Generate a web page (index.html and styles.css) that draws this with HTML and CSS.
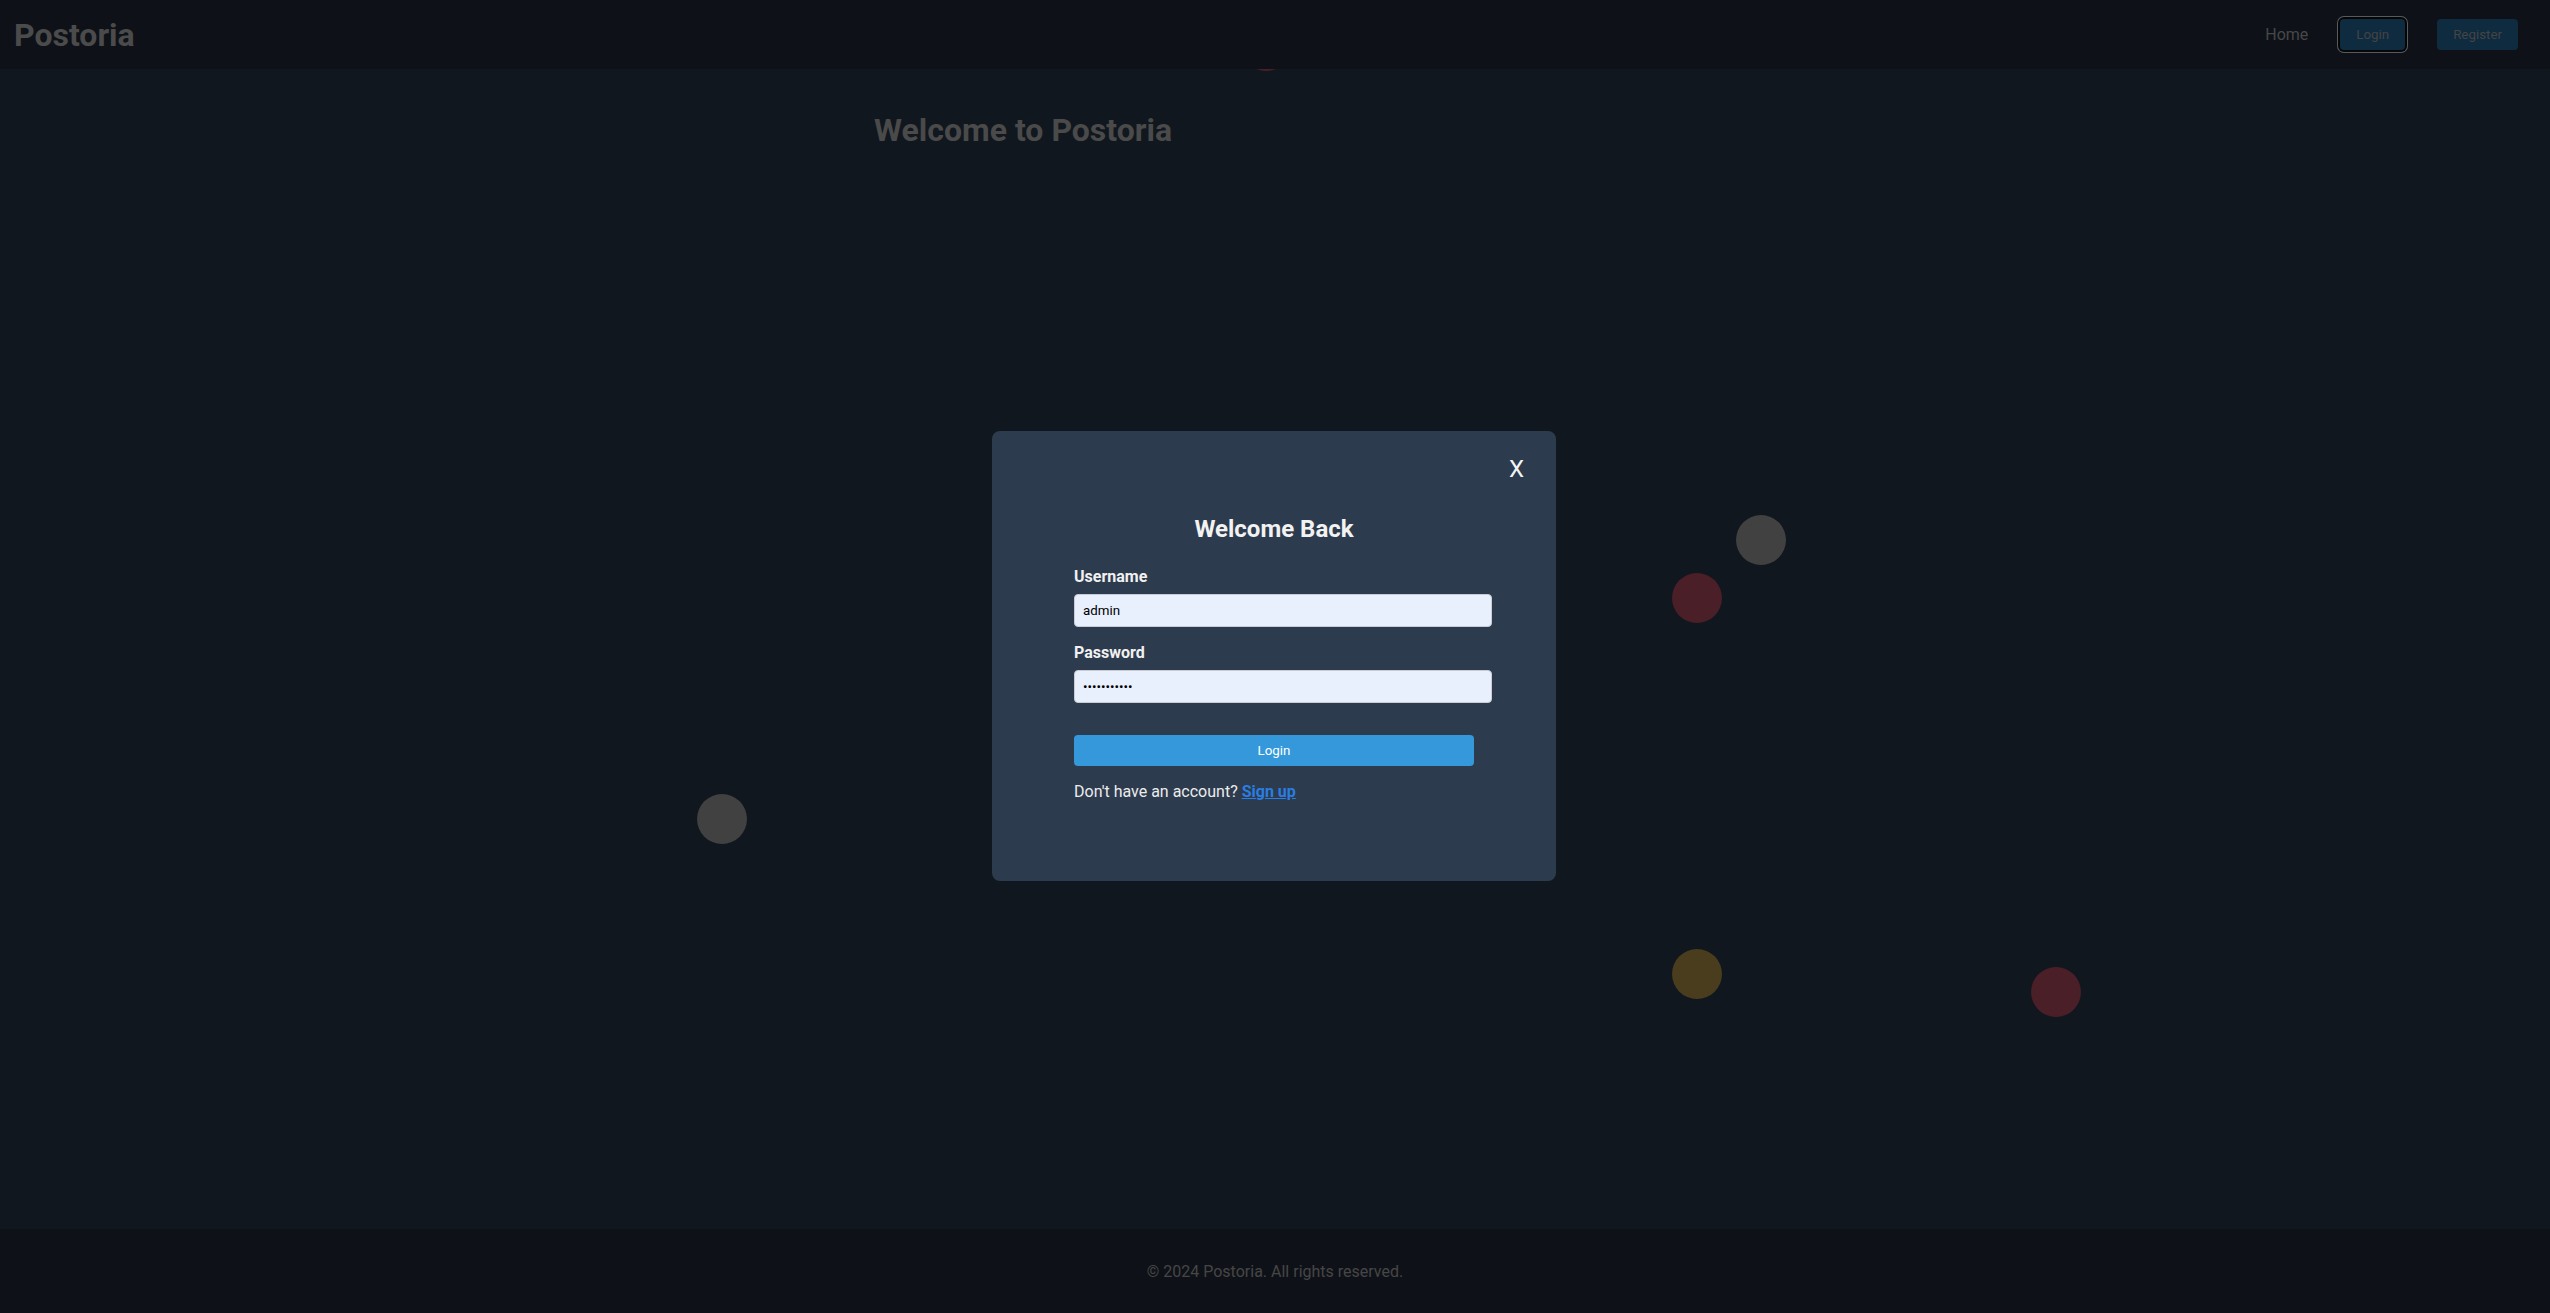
FILE: index.html
```html
<!DOCTYPE html>
<html lang="en">
<head>
<meta charset="utf-8">
<title>Postoria</title>
<link rel="stylesheet" href="styles.css">
</head>
<body>
  <div class="bubbles">
    <span class="bubble red" style="left:1241px;top:21px"></span>
    <span class="bubble gray" style="left:1736px;top:515px"></span>
    <span class="bubble red" style="left:1672px;top:573px"></span>
    <span class="bubble gray" style="left:697px;top:794px"></span>
    <span class="bubble yellow" style="left:1672px;top:949px"></span>
    <span class="bubble red" style="left:2031px;top:967px"></span>
  </div>

  <header class="site-header">
    <div class="logo">Postoria</div>
    <nav class="nav">
      <a class="nav-link" href="#">Home</a>
      <button class="nav-btn focused">Login</button>
      <button class="nav-btn">Register</button>
    </nav>
  </header>

  <main class="main">
    <div class="container">
      <h1 class="page-title">Welcome to Postoria</h1>
    </div>
  </main>

  <footer class="site-footer">© 2024 Postoria. All rights reserved.</footer>

  <div class="overlay">
    <div class="modal">
      <div class="modal-top">
        <button class="close-btn">X</button>
      </div>
      <h2 class="modal-title">Welcome Back</h2>
      <form class="login-form">
        <div class="form-group">
          <label class="form-label">Username</label>
          <input class="form-input" type="text" value="admin">
        </div>
        <div class="form-group">
          <label class="form-label">Password</label>
          <input class="form-input" type="password" value="admin123456">
        </div>
        <button class="submit-btn" type="button">Login</button>
        <p class="signup-text">Don't have an account? <a class="signup-link" href="#">Sign up</a></p>
      </form>
    </div>
  </div>
</body>
</html>
```
FILE: styles.css
```css
* { box-sizing: border-box; }

html, body { height: 100%; }

body {
  margin: 0;
  font-family: Roboto, "Liberation Sans", sans-serif;
  background: #11171e;
  display: flex;
  flex-direction: column;
  min-height: 100vh;
  position: relative;
  overflow: hidden;
}

.bubbles {
  position: absolute;
  inset: 0;
  z-index: 1;
  pointer-events: none;
}

.bubble {
  position: absolute;
  width: 50px;
  height: 50px;
  border-radius: 50%;
}
.bubble.red { background: #4a1f27; }
.bubble.gray { background: #414141; }
.bubble.yellow { background: #4a3d1e; }

.site-header {
  position: relative;
  z-index: 2;
  height: 69px;
  flex: 0 0 69px;
  background: #0e1218;
  display: flex;
  align-items: center;
  justify-content: space-between;
  padding: 0 32px 0 14px;
}

.logo {
  font-size: 32px;
  font-weight: 700;
  color: #4b4b4b;
  line-height: 1;
}

.nav {
  display: flex;
  align-items: center;
  gap: 32px;
}

.nav-link {
  color: #474747;
  text-decoration: none;
  font-size: 16px;
}

.nav-btn {
  font-family: Roboto, "Liberation Sans", sans-serif;
  font-size: 13.33px;
  color: #444;
  background: #0f2b40;
  border: none;
  border-radius: 4px;
  padding: 8px 16px;
  height: 31px;
  line-height: 15px;
}

.nav-btn.focused {
  box-shadow: 0 0 0 2px #050607, 0 0 0 3px #5a5a5a;
}

.main {
  flex: 1;
  position: relative;
  z-index: 0;
}

.container {
  max-width: 800px;
  margin: 0 auto;
  padding-top: 43px;
}

.page-title {
  margin: 0 0 0 -1px;
  font-size: 32px;
  font-weight: 700;
  color: #4a4a4a;
  line-height: 37px;
}

.site-footer {
  position: relative;
  z-index: 2;
  background: #0e1218;
  padding: 33px 0 32px;
  text-align: center;
  color: #464646;
  font-size: 16px;
  line-height: 19px;
}

.overlay {
  position: fixed;
  inset: 0;
  z-index: 10;
  display: flex;
  align-items: center;
  justify-content: center;
}

.modal {
  width: 564px;
  margin: -2px 0 0 -2px;
  background: #2d3b4e;
  border-radius: 8px;
  padding: 24px 32px 80px;
}

.modal-top {
  display: flex;
  justify-content: flex-end;
  height: 28px;
}

.close-btn {
  background: none;
  border: none;
  padding: 0;
  font-family: Roboto, "Liberation Sans", sans-serif;
  font-size: 24px;
  line-height: 28px;
  color: #f4f4f4;
}

.modal-title {
  margin: 32px 0 24px;
  text-align: center;
  font-size: 24px;
  font-weight: 700;
  line-height: 28px;
  color: #f2f2f2;
}

.login-form {
  max-width: 400px;
  margin: 0 auto;
}

.form-group {
  margin-bottom: 16px;
}

.form-label {
  display: block;
  font-size: 16px;
  font-weight: 700;
  line-height: 19px;
  color: #f1f1f1;
  margin-bottom: 8px;
}

.form-input {
  display: block;
  width: calc(100% + 18px);
  height: 33px;
  padding: 0 8px;
  font-family: Roboto, "Liberation Sans", sans-serif;
  font-size: 13.33px;
  color: #000;
  background: #e8f0fe;
  border: 1px solid #c9ccd2;
  border-radius: 4px;
}

.submit-btn {
  display: block;
  width: 100%;
  height: 31px;
  margin-top: 32px;
  border: none;
  border-radius: 4px;
  background: #3498db;
  color: #fff;
  font-family: Roboto, "Liberation Sans", sans-serif;
  font-size: 13.33px;
}

.signup-text {
  margin: 16px 0 0;
  font-size: 16px;
  line-height: 19px;
  color: #ececec;
}

.signup-link {
  color: #2a7de1;
  font-weight: 700;
  text-decoration: underline;
}
```
